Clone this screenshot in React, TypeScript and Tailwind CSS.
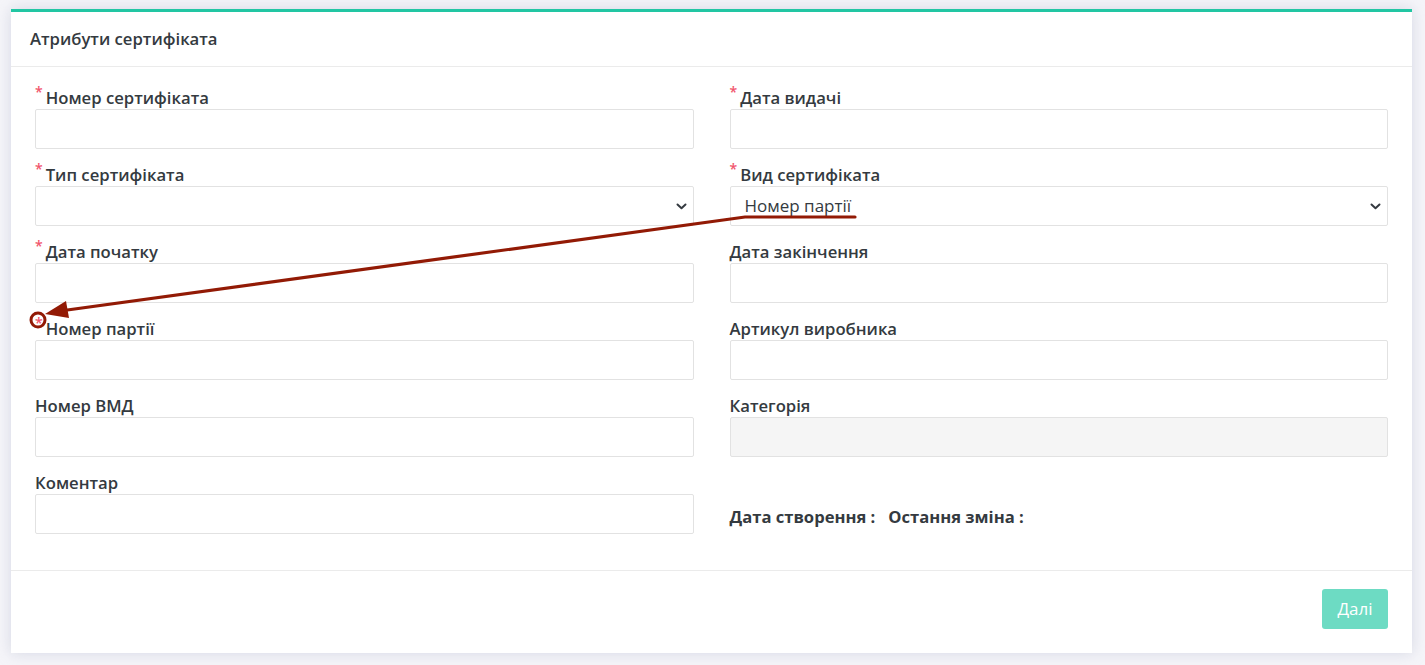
import React from "react";

type Field = {
  label: string;
  required?: boolean;
  kind?: "input" | "select" | "disabled";
  value?: string;
};

const left: Field[] = [
  { label: "Номер сертифіката", required: true },
  { label: "Тип сертифіката", required: true, kind: "select" },
  { label: "Дата початку", required: true },
  { label: "Номер партії", required: true },
  { label: "Номер ВМД" },
  { label: "Коментар" },
];

const right: Field[] = [
  { label: "Дата видачі", required: true },
  { label: "Вид сертифіката", required: true, kind: "select", value: "Номер партії" },
  { label: "Дата закінчення" },
  { label: "Артикул виробника" },
  { label: "Категорія", kind: "disabled" },
];

const Chevron = () => (
  <svg width="13" height="12" viewBox="0 0 13 12" className="text-[#343a40]">
    <path d="M2.5 4.5 6.5 8.2l4-3.7" fill="none" stroke="currentColor" strokeWidth="2" strokeLinecap="round" strokeLinejoin="round" />
  </svg>
);

const FormField = ({ field }: { field: Field }) => (
  <div className="mb-[14px]">
    <label className="flex h-[23px] items-end pb-[1px] text-[16.7px] font-semibold leading-[21px] text-[#343a40]">
      {field.required ? (
        <span className="mr-[3px] self-start pt-[1px] text-[14px] leading-[10px] text-[#f1556c]">*</span>
      ) : null}
      {field.label}
    </label>
    {field.kind === "select" ? (
      <div className="flex h-[40px] items-center justify-between rounded-[2px] border border-[#e2e2e2] bg-white pl-[14px] pr-[5px] text-[17px] text-[#343a40]">
        <span>{field.value ?? ""}</span>
        <Chevron />
      </div>
    ) : (
      <div
        className={
          field.kind === "disabled"
            ? "h-[40px] rounded-[2px] border border-[#e2e2e2] bg-[#f5f5f5]"
            : "h-[40px] rounded-[2px] border border-[#e2e2e2] bg-white"
        }
      />
    )}
  </div>
);

export default function App() {
  return (
    <div className="min-h-[665px] bg-[#f5f5f9] pl-[11px] pr-[13px] pt-[9px] pb-[12px] font-['Open_Sans',sans-serif]">
      <div className="relative border-t-[3px] border-[#22c6a3] bg-white shadow-[0_0_14px_rgba(154,161,190,0.35)]">
        <div className="flex h-[55px] items-center border-b border-[#ebebeb] px-[19px]">
          <h4 className="text-[16.7px] font-semibold text-[#343a40]">Атрибути сертифіката</h4>
        </div>

        <div className="grid grid-cols-2 gap-x-[36px] px-[24px] pt-[19px] pb-[22px]">
          <div>
            {left.map((f) => (
              <FormField key={f.label} field={f} />
            ))}
          </div>
          <div>
            {right.map((f) => (
              <FormField key={f.label} field={f} />
            ))}
            <div className="flex h-[77px] items-center gap-[13px] pt-[15px] text-[16.6px] font-bold text-[#343a40]">
              <span>Дата створення :</span>
              <span>Остання зміна :</span>
            </div>
          </div>
        </div>

        <div className="flex justify-end border-t border-[#ebebeb] px-[24px] pt-[18px] pb-[24px]">
          <button className="h-[40px] w-[66px] rounded-[3px] bg-[#6ddbc3] text-[17px] text-white">Далі</button>
        </div>

        {/* annotation arrow */}
        <svg className="pointer-events-none absolute left-[-11px] top-[-12px]" width="1425" height="665">
          <g stroke="#921a05" fill="none" strokeWidth="3.2" strokeLinecap="round">
            <path d="M855 217 L745 217 L60 311" />
            <circle cx="38" cy="320" r="7" strokeWidth="3" />
          </g>
          <path d="M45 314 L66 301 L69 318 Z" fill="#921a05" />
        </svg>
      </div>
    </div>
  );
}
